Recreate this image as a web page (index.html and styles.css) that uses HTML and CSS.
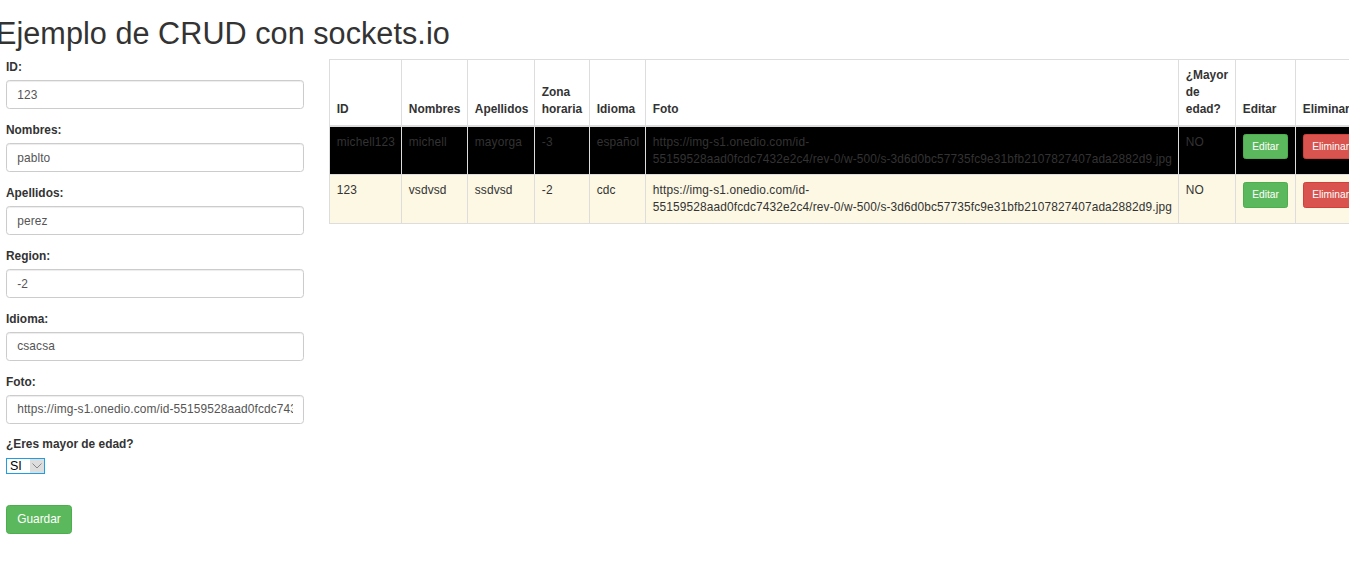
FILE: index.html
```html
<!DOCTYPE html>
<html lang="es">
<head>
<meta charset="utf-8">
<title>Ejemplo de CRUD con sockets.io</title>
<link rel="stylesheet" href="styles.css">
</head>
<body>
<h1 class="title">Ejemplo de CRUD con sockets.io</h1>
<div class="layout">
  <form class="form-col">
    <div class="form-group">
      <label class="label">ID:</label>
      <input class="input" type="text" value="123">
    </div>
    <div class="form-group">
      <label class="label">Nombres:</label>
      <input class="input" type="text" value="pablto">
    </div>
    <div class="form-group">
      <label class="label">Apellidos:</label>
      <input class="input" type="text" value="perez">
    </div>
    <div class="form-group">
      <label class="label">Region:</label>
      <input class="input" type="text" value="-2">
    </div>
    <div class="form-group">
      <label class="label">Idioma:</label>
      <input class="input" type="text" value="csacsa">
    </div>
    <div class="form-group">
      <label class="label">Foto:</label>
      <input class="input" type="text" value="https://img-s1.onedio.com/id-55159528aad0fcdc7432e2c4/rev-0/w-500/s-3d6d0bc57735fc9e31bfb2107827407ada2882d9.jpg">
    </div>
    <div class="form-group select-group">
      <label class="label">¿Eres mayor de edad?</label>
      <span class="select-wrap">
        <select class="select"><option>SI</option><option>NO</option></select>
        <span class="select-arrow"><svg width="10" height="6" viewBox="0 0 10 6"><path d="M0.5 0.5 L5 5 L9.5 0.5" fill="none" stroke="#888" stroke-width="1"/></svg></span>
      </span>
    </div>
    <button class="btn btn-success btn-md" type="button">Guardar</button>
  </form>
  <table class="table">
    <colgroup>
      <col class="c-id"><col class="c-nom"><col class="c-ape"><col class="c-zona"><col class="c-idi"><col class="c-foto"><col class="c-may"><col class="c-edit"><col class="c-del">
    </colgroup>
    <thead>
      <tr>
        <th>ID</th><th>Nombres</th><th>Apellidos</th><th>Zona horaria</th><th>Idioma</th><th>Foto</th><th>¿Mayor de edad?</th><th>Editar</th><th>Eliminar</th>
      </tr>
    </thead>
    <tbody>
      <tr class="row-dark">
        <td>michell123</td><td>michell</td><td>mayorga</td><td>-3</td><td>español</td>
        <td><span class="nowrap">https://img-s1.onedio.com/id-</span><wbr><span class="nowrap">55159528aad0fcdc7432e2c4/rev-0/w-500/s-3d6d0bc57735fc9e31bfb2107827407ada2882d9.jpg</span></td>
        <td>NO</td>
        <td><button class="btn btn-success btn-sm" type="button">Editar</button></td>
        <td><button class="btn btn-danger btn-sm" type="button">Eliminar</button></td>
      </tr>
      <tr class="row-warning">
        <td>123</td><td>vsdvsd</td><td>ssdvsd</td><td>-2</td><td>cdc</td>
        <td><span class="nowrap">https://img-s1.onedio.com/id-</span><wbr><span class="nowrap">55159528aad0fcdc7432e2c4/rev-0/w-500/s-3d6d0bc57735fc9e31bfb2107827407ada2882d9.jpg</span></td>
        <td>NO</td>
        <td><button class="btn btn-success btn-sm" type="button">Editar</button></td>
        <td><button class="btn btn-danger btn-sm" type="button">Eliminar</button></td>
      </tr>
    </tbody>
  </table>
</div>
</body>
</html>
```

FILE: styles.css
```css
html {
  overflow-x: hidden;
}
body {
  margin: 0;
  font-family: "Liberation Sans", Arial, sans-serif;
  font-size: 11.9px;
  line-height: 1.42857;
  color: #333;
  background: #fff;
  overflow-x: hidden;
}
.title {
  margin: 17px 0 8.5px -4px;
  font-size: 30.6px;
  font-weight: normal;
  line-height: 1.1;
  color: #333;
  letter-spacing: 0.05px;
}
.layout {
  display: flex;
  align-items: flex-start;
}
.form-col {
  flex: 0 0 298px;
  margin: 0 25px 0 6px;
}
.form-group {
  margin-bottom: 12.75px;
}
.label {
  display: block;
  font-weight: bold;
  margin-bottom: 4.25px;
}
.input {
  display: block;
  box-sizing: border-box;
  width: 298px;
  height: 28.9px;
  padding: 5.1px 10.2px;
  font-family: inherit;
  font-size: 11.9px;
  letter-spacing: 0.13px;
  color: #555;
  background: #fff;
  border: 1px solid #ccc;
  border-radius: 3.4px;
  box-shadow: inset 0 1px 1px rgba(0,0,0,.075);
  outline: none;
}
.select-group {
  margin-bottom: 30px;
}
.select-wrap {
  display: inline-flex;
  box-sizing: border-box;
  height: 16px;
  border: 1px solid #1e9fe3;
  background: #fff;
}
.select {
  appearance: none;
  -webkit-appearance: none;
  border: 0;
  margin: 0;
  padding: 0 0 0 3px;
  width: 23px;
  height: 14px;
  font-family: "Liberation Sans", Arial, sans-serif;
  font-size: 12.5px;
  line-height: 14px;
  color: #000;
  background: #fff;
  outline: none;
}
.select-arrow {
  display: flex;
  align-items: center;
  justify-content: center;
  width: 14px;
  height: 14px;
  background: #ddd;
}
.btn {
  display: inline-block;
  font-family: inherit;
  color: #fff;
  border: 1px solid transparent;
  cursor: pointer;
  margin: 0;
}
.btn-md {
  font-size: 11.9px;
  line-height: 17px;
  padding: 5.1px 10.2px;
  border-radius: 3.4px;
}
.btn-sm {
  font-size: 10.2px;
  line-height: 1.5;
  padding: 4.25px 8.5px;
  border-radius: 2.55px;
}
.btn-success {
  background: #5cb85c;
  border-color: #4cae4c;
}
.btn-danger {
  background: #d9534f;
  border-color: #d43f3a;
}
.table {
  flex: 0 0 auto;
  width: 1028px;
  table-layout: fixed;
  border-collapse: collapse;
  border-spacing: 0;
  border: 1px solid #ddd;
}
.c-id { width: 72px; }
.c-nom { width: 66px; }
.c-ape { width: 67px; }
.c-zona { width: 55px; }
.c-idi { width: 56px; }
.c-foto { width: 533px; }
.c-may { width: 57px; }
.c-edit { width: 60px; }
.c-del { width: 62px; }
.table th,
.table td {
  padding: 6.8px;
  border: 1px solid #ddd;
  text-align: left;
  vertical-align: top;
  line-height: 17px;
}
.table td {
  letter-spacing: 0.13px;
}
.table td .btn {
  letter-spacing: 0;
}
.table th {
  vertical-align: bottom;
  border-bottom: 2px solid #ddd;
  font-weight: bold;
}
.row-dark td {
  background: #000;
}
.row-warning td {
  background: #fcf8e3;
}
.nowrap {
  white-space: nowrap;
}
```
